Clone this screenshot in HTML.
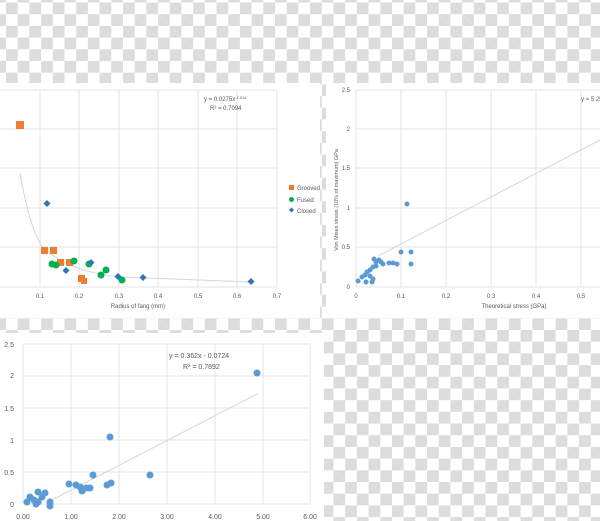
<!DOCTYPE html>
<html><head><meta charset="utf-8"><style>
html,body{margin:0;padding:0;}
body{width:600px;height:521px;overflow:hidden;position:relative;
background-color:#fff;
background-image:linear-gradient(45deg,#dcdcdc 25%,transparent 25%,transparent 75%,#dcdcdc 75%),linear-gradient(45deg,#dcdcdc 25%,transparent 25%,transparent 75%,#dcdcdc 75%);
background-size:23.4px 23.4px;background-position:-5.7px 2.5px,6px 14.2px;
font-family:"Liberation Sans",sans-serif;}
svg{position:absolute;left:0;top:0}
text{font-family:"Liberation Sans",sans-serif;fill:#595959}
</style></head><body>
<svg width="600" height="521" viewBox="0 0 600 521">
<!-- panels -->
<rect x="0" y="83" width="320" height="235" fill="#fff"/>
<rect x="326" y="83" width="274" height="235" fill="#fff"/>
<rect x="0" y="333" width="324" height="188" fill="#fff"/>
<!-- chart1 grid -->
<g stroke="#e3e3e3" stroke-width="1">
<line x1="0" y1="90" x2="277" y2="90"/><line x1="0" y1="129" x2="277" y2="129"/><line x1="0" y1="168" x2="277" y2="168"/><line x1="0" y1="208" x2="277" y2="208"/><line x1="0" y1="247" x2="277" y2="247"/><line x1="0" y1="287" x2="277" y2="287"/>
<line x1="40" y1="90" x2="40" y2="287"/><line x1="79" y1="90" x2="79" y2="287"/><line x1="119" y1="90" x2="119" y2="287"/><line x1="158" y1="90" x2="158" y2="287"/><line x1="198" y1="90" x2="198" y2="287"/><line x1="237" y1="90" x2="237" y2="287"/><line x1="277" y1="90" x2="277" y2="287"/>
</g>
<path d="M20 173 Q30 230 43 248 Q70 272 120 277 L250 282" fill="none" stroke="#cfd8dc" stroke-width="1"/>
<g font-size="6"><text x="40" y="298" text-anchor="middle">0.1</text><text x="79" y="298" text-anchor="middle">0.2</text><text x="119" y="298" text-anchor="middle">0.3</text><text x="158" y="298" text-anchor="middle">0.4</text><text x="198" y="298" text-anchor="middle">0.5</text><text x="237" y="298" text-anchor="middle">0.6</text><text x="277" y="298" text-anchor="middle">0.7</text>
<text x="138" y="308" text-anchor="middle">Radius of fang (mm)</text>
<text x="204" y="101">y = 0.0275x<tspan font-size="4" dy="-2">-1.014</tspan></text><text x="210" y="110">R² = 0.7094</text>
<text x="297" y="190">Grooved</text><text x="297" y="202">Fused</text><text x="297" y="213">Closed</text></g>
<rect x="289" y="185" width="5" height="5" fill="#ed7d31"/><circle cx="291.5" cy="199.5" r="2.5" fill="#00b050"/><path d="M291.5 207.5l2.5 2.5-2.5 2.5-2.5-2.5z" fill="#2e75b6"/>
<g fill="#ed7d31"><rect x="16" y="121" width="8" height="8"/><rect x="41" y="247" width="7" height="7"/><rect x="50" y="247" width="7" height="7"/><rect x="57" y="259" width="7" height="7"/><rect x="66" y="259" width="7" height="7"/><rect x="78" y="275" width="7" height="7"/><rect x="81" y="278" width="6" height="6"/></g>
<g fill="#00b050"><circle cx="52" cy="264" r="3.5"/><circle cx="56" cy="265" r="3.5"/><circle cx="74" cy="261" r="3.5"/><circle cx="89" cy="264" r="3.5"/><circle cx="101" cy="275" r="3.5"/><circle cx="106" cy="270" r="3.5"/><circle cx="122" cy="280" r="3.5"/></g>
<g fill="#2e75b6"><path d="M47 200l3.5 3.5-3.5 3.5-3.5-3.5z"/><path d="M66 267l3.5 3.5-3.5 3.5-3.5-3.5z"/><path d="M91 259l3.5 3.5-3.5 3.5-3.5-3.5z"/><path d="M118 273l3.5 3.5-3.5 3.5-3.5-3.5z"/><path d="M143 274l3.5 3.5-3.5 3.5-3.5-3.5z"/><path d="M251 278l3.5 3.5-3.5 3.5-3.5-3.5z"/></g>
<!-- chart2 -->
<g stroke="#e3e3e3"><line x1="356" y1="90" x2="600" y2="90"/><line x1="356" y1="129" x2="600" y2="129"/><line x1="356" y1="168" x2="600" y2="168"/><line x1="356" y1="208" x2="600" y2="208"/><line x1="356" y1="247" x2="600" y2="247"/><line x1="356" y1="287" x2="600" y2="287"/>
<line x1="356" y1="90" x2="356" y2="287"/><line x1="401" y1="90" x2="401" y2="287"/><line x1="446" y1="90" x2="446" y2="287"/><line x1="491" y1="90" x2="491" y2="287"/><line x1="536" y1="90" x2="536" y2="287"/><line x1="581" y1="90" x2="581" y2="287"/></g>
<line x1="378" y1="256" x2="600" y2="140" stroke="#cfd8dc"/>
<g font-size="6"><text x="350" y="92" text-anchor="end">2.5</text><text x="350" y="131" text-anchor="end">2</text><text x="350" y="170" text-anchor="end">1.5</text><text x="350" y="210" text-anchor="end">1</text><text x="350" y="249" text-anchor="end">0.5</text><text x="350" y="289" text-anchor="end">0</text>
<text x="356" y="298" text-anchor="middle">0</text><text x="401" y="298" text-anchor="middle">0.1</text><text x="446" y="298" text-anchor="middle">0.2</text><text x="491" y="298" text-anchor="middle">0.3</text><text x="536" y="298" text-anchor="middle">0.4</text><text x="581" y="298" text-anchor="middle">0.5</text>
<text x="514" y="308" text-anchor="middle">Theoretical stress (GPa)</text>
<text x="581" y="101">y = 5.25</text>
<text transform="translate(338 200) rotate(-90)" text-anchor="middle" font-size="5.5">Von Mises stress (10% of maximum) GPa</text></g>
<g fill="#5b9bd5"><circle cx="358" cy="281" r="2.5"/><circle cx="362" cy="277" r="2.5"/><circle cx="365" cy="275" r="2.5"/><circle cx="367" cy="272" r="2.5"/><circle cx="370" cy="270" r="2.5"/><circle cx="366" cy="282" r="2.5"/><circle cx="373" cy="267" r="2.5"/><circle cx="374" cy="259" r="2.5"/><circle cx="376" cy="262" r="2.5"/><circle cx="370" cy="276" r="2.5"/><circle cx="372" cy="282" r="2.5"/><circle cx="373" cy="279" r="2.5"/><circle cx="376" cy="266" r="2.5"/><circle cx="383" cy="264" r="2.5"/><circle cx="379" cy="260" r="2.5"/><circle cx="381" cy="262" r="2.5"/><circle cx="389" cy="263" r="2.5"/><circle cx="393" cy="263" r="2.5"/><circle cx="397" cy="264" r="2.5"/><circle cx="401" cy="252" r="2.5"/><circle cx="411" cy="264" r="2.5"/><circle cx="407" cy="204" r="2.5"/><circle cx="411" cy="252" r="2.5"/></g>
<!-- chart3 -->
<g stroke="#e3e3e3"><line x1="23" y1="344" x2="310" y2="344"/><line x1="23" y1="376" x2="310" y2="376"/><line x1="23" y1="408" x2="310" y2="408"/><line x1="23" y1="440" x2="310" y2="440"/><line x1="23" y1="472" x2="310" y2="472"/><line x1="23" y1="504" x2="310" y2="504"/>
<line x1="23" y1="344" x2="23" y2="504"/><line x1="71" y1="344" x2="71" y2="504"/><line x1="119" y1="344" x2="119" y2="504"/><line x1="167" y1="344" x2="167" y2="504"/><line x1="215" y1="344" x2="215" y2="504"/><line x1="263" y1="344" x2="263" y2="504"/><line x1="310" y1="344" x2="310" y2="504"/></g>
<line x1="48" y1="502" x2="257" y2="394" stroke="#cfd8dc"/>
<g font-size="7"><text x="14" y="347" text-anchor="end">2.5</text><text x="14" y="378" text-anchor="end">2</text><text x="14" y="411" text-anchor="end">1.5</text><text x="14" y="443" text-anchor="end">1</text><text x="14" y="475" text-anchor="end">0.5</text><text x="14" y="507" text-anchor="end">0</text>
<text x="23" y="519" text-anchor="middle">0.00</text><text x="71" y="519" text-anchor="middle">1.00</text><text x="119" y="519" text-anchor="middle">2.00</text><text x="167" y="519" text-anchor="middle">3.00</text><text x="215" y="519" text-anchor="middle">4.00</text><text x="263" y="519" text-anchor="middle">5.00</text><text x="310" y="519" text-anchor="middle">6.00</text>
<text x="169" y="358">y = 0.362x - 0.0724</text><text x="183" y="369">R² = 0.7892</text></g>
<g fill="#5b9bd5"><circle cx="257" cy="373" r="3.5"/><circle cx="110" cy="437" r="3.5"/><circle cx="93" cy="475" r="3.5"/><circle cx="150" cy="475" r="3.5"/><circle cx="69" cy="484" r="3.5"/><circle cx="76" cy="485" r="3.5"/><circle cx="80" cy="487" r="3.5"/><circle cx="82" cy="491" r="3.5"/><circle cx="86" cy="488" r="3.5"/><circle cx="90" cy="488" r="3.5"/><circle cx="107" cy="485" r="3.5"/><circle cx="111" cy="483" r="3.5"/><circle cx="30" cy="497" r="3.5"/><circle cx="34" cy="500" r="3.5"/><circle cx="38" cy="492" r="3.5"/><circle cx="38" cy="502" r="3.5"/><circle cx="42" cy="497" r="3.5"/><circle cx="45" cy="493" r="3.5"/><circle cx="36" cy="504" r="3.5"/><circle cx="50" cy="502" r="3.5"/><circle cx="27" cy="502" r="3.5"/><circle cx="50" cy="506" r="3.5"/></g>
</svg>
</body></html>
